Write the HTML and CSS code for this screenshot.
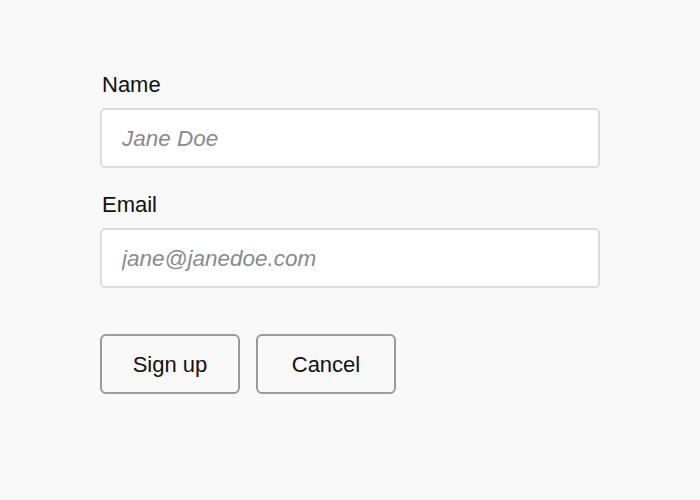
FILE: index.html
```html
<!DOCTYPE html>
<html>
<head>
<meta charset="utf-8">
<link rel="stylesheet" href="styles.css">
</head>
<body>
<form class="form">
  <div class="field">
    <label class="label" for="name">Name</label>
    <input class="input" id="name" type="text" placeholder="Jane Doe">
  </div>
  <div class="field">
    <label class="label" for="email">Email</label>
    <input class="input" id="email" type="email" placeholder="jane@janedoe.com">
  </div>
  <div class="actions">
    <button class="btn" type="button">Sign up</button>
    <button class="btn" type="button">Cancel</button>
  </div>
</form>
</body>
</html>
```
FILE: styles.css
```css
html, body {
  margin: 0;
  padding: 0;
  background: #f8f8f8;
}
body {
  font-family: "Liberation Sans", Arial, sans-serif;
  color: #111;
}
.form {
  width: 500px;
  margin: 0 0 0 100px;
  padding-top: 70px;
  display: flex;
  flex-direction: column;
}
.field {
  display: flex;
  flex-direction: column;
  margin-bottom: 22px;
}
.label {
  font-size: 22px;
  line-height: 28px;
  padding: 1px 0 0 2px;
  margin-bottom: 9px;
}
.input {
  box-sizing: border-box;
  height: 60px;
  width: 500px;
  border: 2px solid #dcdcdc;
  border-radius: 5px;
  background: #fff;
  padding: 1px 20px 0;
  font-family: inherit;
  font-size: 22.5px;
  color: #111;
  outline: none;
}
.input::placeholder {
  color: #8a8a8a;
  font-style: italic;
}
.actions {
  display: flex;
  gap: 16px;
  margin-top: 24px;
}
.btn {
  box-sizing: border-box;
  width: 140px;
  height: 60px;
  border: 2px solid #9a9a9a;
  border-radius: 6px;
  background: transparent;
  padding-top: 2px;
  font-family: inherit;
  font-size: 22px;
  color: #111;
}
```
